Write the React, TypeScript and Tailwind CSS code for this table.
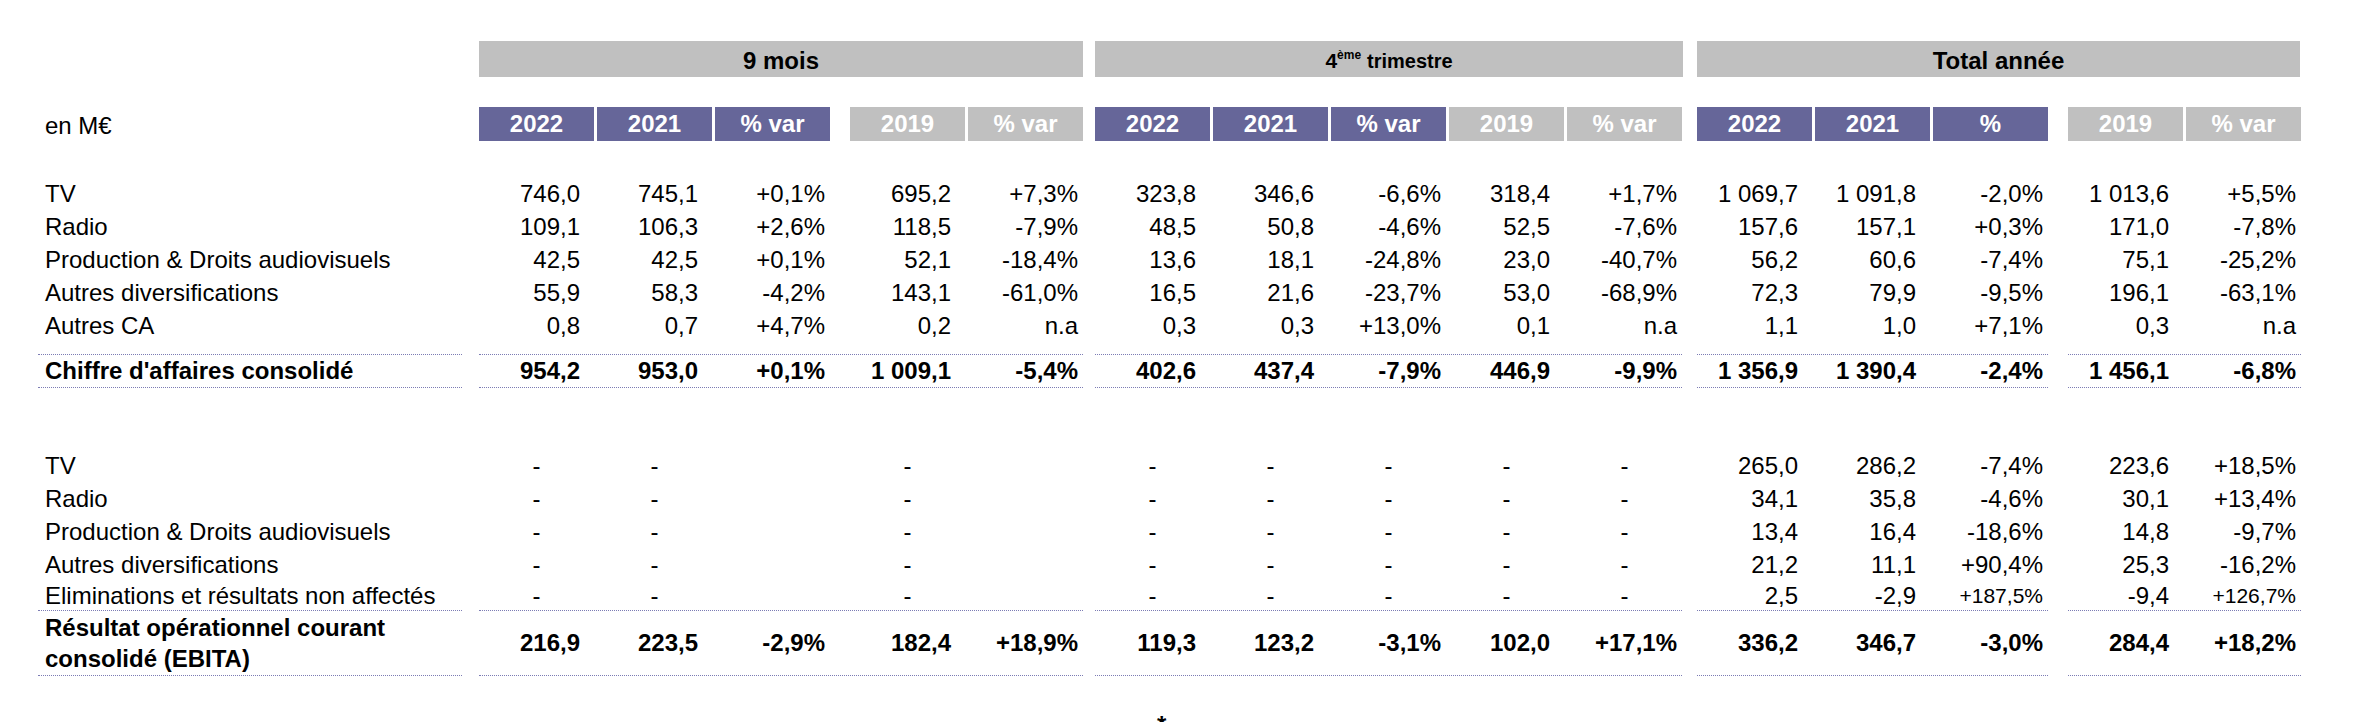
type Kind = "n" | "p";

const KINDS: Kind[] = ["n", "n", "p", "n", "p", "n", "n", "p", "n", "p", "n", "n", "p", "n", "p"];

type Row = { label: string; vals: string[]; small?: number[] };

const revenue: Row[] = [
  { label: "TV", vals: ["746,0", "745,1", "+0,1%", "695,2", "+7,3%", "323,8", "346,6", "-6,6%", "318,4", "+1,7%", "1 069,7", "1 091,8", "-2,0%", "1 013,6", "+5,5%"] },
  { label: "Radio", vals: ["109,1", "106,3", "+2,6%", "118,5", "-7,9%", "48,5", "50,8", "-4,6%", "52,5", "-7,6%", "157,6", "157,1", "+0,3%", "171,0", "-7,8%"] },
  { label: "Production & Droits audiovisuels", vals: ["42,5", "42,5", "+0,1%", "52,1", "-18,4%", "13,6", "18,1", "-24,8%", "23,0", "-40,7%", "56,2", "60,6", "-7,4%", "75,1", "-25,2%"] },
  { label: "Autres diversifications", vals: ["55,9", "58,3", "-4,2%", "143,1", "-61,0%", "16,5", "21,6", "-23,7%", "53,0", "-68,9%", "72,3", "79,9", "-9,5%", "196,1", "-63,1%"] },
  { label: "Autres CA", vals: ["0,8", "0,7", "+4,7%", "0,2", "n.a", "0,3", "0,3", "+13,0%", "0,1", "n.a", "1,1", "1,0", "+7,1%", "0,3", "n.a"] },
];

const revenueTotal = ["954,2", "953,0", "+0,1%", "1 009,1", "-5,4%", "402,6", "437,4", "-7,9%", "446,9", "-9,9%", "1 356,9", "1 390,4", "-2,4%", "1 456,1", "-6,8%"];

const dashes = ["-", "-", "", "-", "", "-", "-", "-", "-", "-"];

const ebita: Row[] = [
  { label: "TV", vals: [...dashes, "265,0", "286,2", "-7,4%", "223,6", "+18,5%"] },
  { label: "Radio", vals: [...dashes, "34,1", "35,8", "-4,6%", "30,1", "+13,4%"] },
  { label: "Production & Droits audiovisuels", vals: [...dashes, "13,4", "16,4", "-18,6%", "14,8", "-9,7%"] },
  { label: "Autres diversifications", vals: [...dashes, "21,2", "11,1", "+90,4%", "25,3", "-16,2%"] },
  { label: "Eliminations et résultats non affectés", vals: [...dashes, "2,5", "-2,9", "+187,5%", "-9,4", "+126,7%"], small: [12, 14] },
];

const ebitaTotal = ["216,9", "223,5", "-2,9%", "182,4", "+18,9%", "119,3", "123,2", "-3,1%", "102,0", "+17,1%", "336,2", "346,7", "-3,0%", "284,4", "+18,2%"];

function Cell({ v, i, small }: { v: string; i: number; small?: boolean }) {
  const align = v === "-" ? "justify-center" : KINDS[i] === "n" ? "justify-end pr-[14px]" : "justify-end pr-[5px]";
  return (
    <div className={`flex w-[115px] shrink-0 items-center whitespace-nowrap ${align} ${small ? "text-[21px]" : ""}`}>
      {v.replace(/ /g, "\u00a0")}
    </div>
  );
}

// dotted rule used above and below the total rows
const line = "border-y border-dotted border-[#7c7cb4]";

function DataRow({ label, vals, small, total, h, two }: { label: React.ReactNode; vals: string[]; small?: number[]; total?: boolean; h: string; two?: boolean }) {
  const b = total ? line : "";
  const c = (i: number) => <Cell key={i} v={vals[i]} i={i} small={small?.includes(i)} />;
  return (
    <div className={`flex ${h} ${total ? "font-bold" : ""}`}>
      <div className={`ml-[38px] flex w-[424px] shrink-0 items-center pl-[7px] ${two ? "leading-[31px]" : ""} ${b}`}>{label}</div>
      <div className={`ml-[17px] flex w-[604px] shrink-0 ${b}`}>
        <div className="flex gap-[3px]">{[0, 1, 2].map(c)}</div>
        <div className="w-[20px] shrink-0" />
        <div className="flex gap-[3px]">{[3, 4].map(c)}</div>
      </div>
      <div className={`ml-[12px] flex w-[587px] shrink-0 gap-[3px] ${b}`}>{[5, 6, 7, 8, 9].map(c)}</div>
      <div className={`ml-[15px] flex w-[351px] shrink-0 gap-[3px] ${b}`}>{[10, 11, 12].map(c)}</div>
      <div className={`ml-[20px] flex w-[233px] shrink-0 gap-[3px] ${b}`}>{[13, 14].map(c)}</div>
    </div>
  );
}

function Head({ t, purple }: { t: string; purple?: boolean }) {
  return (
    <div className={`flex w-[115px] shrink-0 items-center justify-center font-bold text-white ${purple ? "bg-[#666699]" : "bg-[#c0c0c0]"}`}>
      {t}
    </div>
  );
}

export default function App() {
  return (
    <div className="min-h-[722px] bg-white text-[24px] text-black font-['Liberation_Sans',Arial,sans-serif]">
      <div className="h-[41px]" />
      {/* section bars */}
      <div className="flex h-[36px] font-bold">
        <div className="ml-[479px] flex w-[604px] items-center justify-center bg-[#c0c0c0] pt-[3px]">9 mois</div>
        <div className="ml-[12px] flex w-[588px] items-center justify-center bg-[#c0c0c0] pt-[3px] text-[21px]">
          4<sup className="text-[12px]">ème</sup>&nbsp;<span className="text-[20px]">trimestre</span>
        </div>
        <div className="ml-[14px] flex w-[603px] items-center justify-center bg-[#c0c0c0] pt-[3px]">Total année</div>
      </div>
      <div className="h-[30px]" />
      {/* column heads */}
      <div className="flex h-[34px]">
        <div className="ml-[38px] flex w-[424px] items-center pl-[7px] pt-[4px]">en M€</div>
        <div className="ml-[17px] flex w-[604px] shrink-0">
          <div className="flex gap-[3px]">
            <Head t="2022" purple />
            <Head t="2021" purple />
            <Head t="% var" purple />
          </div>
          <div className="w-[20px] shrink-0" />
          <div className="flex gap-[3px]">
            <Head t="2019" />
            <Head t="% var" />
          </div>
        </div>
        <div className="ml-[12px] flex w-[587px] shrink-0 gap-[3px]">
          <Head t="2022" purple />
          <Head t="2021" purple />
          <Head t="% var" purple />
          <Head t="2019" />
          <Head t="% var" />
        </div>
        <div className="ml-[15px] flex w-[351px] shrink-0 gap-[3px]">
          <Head t="2022" purple />
          <Head t="2021" purple />
          <Head t="%" purple />
        </div>
        <div className="ml-[20px] flex w-[233px] shrink-0 gap-[3px]">
          <Head t="2019" />
          <Head t="% var" />
        </div>
      </div>
      <div className="h-[36px]" />
      {revenue.map((r) => (
        <DataRow key={r.label} label={r.label} vals={r.vals} h="h-[33px]" />
      ))}
      <div className="h-[8px]" />
      <DataRow label="Chiffre d'affaires consolidé" vals={revenueTotal} total h="h-[38px] pt-[4px]" />
      <div className="h-[61px]" />
      {ebita.map((r, i) => (
        <DataRow key={r.label} label={r.label} vals={r.vals} small={r.small} h={i === ebita.length - 1 ? "h-[29px]" : "h-[33px]"} />
      ))}
      <DataRow
        label={
          <span>
            Résultat opérationnel courant
            <br />
            consolidé (EBITA)
          </span>
        }
        vals={ebitaTotal}
        total
        two
        h="h-[66px]"
      />
      <div className="pl-[1157px] pt-[31px] font-bold">*</div>
    </div>
  );
}
